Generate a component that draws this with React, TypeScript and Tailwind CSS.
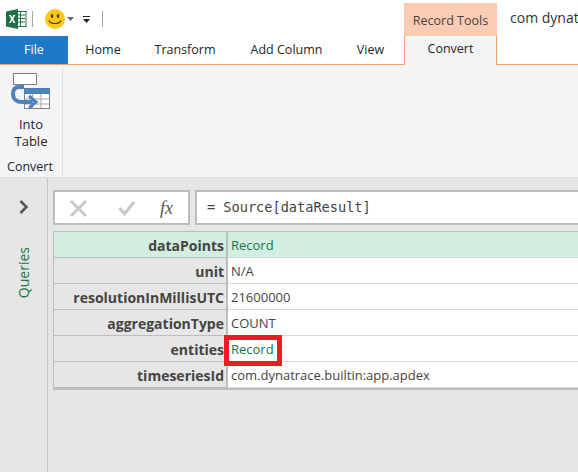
import { Fragment } from "react";

const ui = "font-['Open_Sans','Noto_Sans',sans-serif]";

const rows = [
  { key: "dataPoints", value: "Record", link: true, active: true },
  { key: "unit", value: "N/A" },
  { key: "resolutionInMillisUTC", value: "21600000" },
  { key: "aggregationType", value: "COUNT" },
  { key: "entities", value: "Record", link: true, marked: true },
  { key: "timeseriesId", value: "com.dynatrace.builtin:app.apdex" },
];

function ExcelLogo() {
  return (
    <svg width="21" height="20" viewBox="0 0 21 20">
      <rect x="8" y="2.5" width="12" height="15" fill="#fff" stroke="#217346" />
      <path d="M11 6h8M11 9.5h8M11 13h8M14.5 3v14" stroke="#217346" />
      <path d="M0 2.5 12 0v20L0 17.5z" fill="#1e7145" />
      <path d="M3 6h2l1.2 2.6L7.5 6h1.9L7.2 10l2.3 4H7.5L6.1 11.300 4.800 14H3l2.200-4z" fill="#fff" />
    </svg>
  );
}

function Smiley() {
  return (
    <svg width="20" height="20" viewBox="0 0 20 20">
      <circle cx="10" cy="10" r="10" fill="#fdc915" />
      <ellipse cx="7" cy="7" rx="1.300" ry="2" fill="#4a3b10" />
      <ellipse cx="13" cy="7" rx="1.300" ry="2" fill="#4a3b10" />
      <path d="M4 11.500c1.500 4 10.500 4 12 0" fill="none" stroke="#4a3b10" strokeWidth="1.200" />
    </svg>
  );
}

function IntoTableIcon() {
  return (
    <svg width="39" height="36" viewBox="0 0 39 36">
      <rect x="2.500" y="0.500" width="23" height="11" fill="#fff" stroke="#808080" />
      <rect x="13.500" y="15.500" width="25" height="20" fill="#fff" stroke="#808080" />
      <rect x="13" y="15" width="26" height="6" fill="#4f81bd" />
      <path d="M14 26h24M14 31h24M21.500 21v14M30 21v14" stroke="#a6a6a6" />
      <path d="M13 14H8c-5 0-6 4-6 7 0 5 4 8 9 8h10" fill="none" stroke="#4f81bd" strokeWidth="4" />
      <path d="M18 23l7 6-7 6" fill="none" stroke="#4f81bd" strokeWidth="3" />
    </svg>
  );
}

export default function App() {
  return (
    <div className={`${ui} w-[578px] h-[472px] overflow-hidden bg-[#e6e6e6] flex flex-col text-[13px] text-[#262626]`}>
      {/* title bar */}
      <div className="h-9 bg-white flex shrink-0">
        <div className="w-[404px] shrink-0 flex items-center pl-[6px] pt-[1px]">
          <ExcelLogo />
          <div className="w-px h-4 bg-[#a6a6a6] ml-[5px]" />
          <div className="ml-[12px]"><Smiley /></div>
          <svg className="ml-[2px]" width="7" height="4" viewBox="0 0 7 4"><path d="M0 0h7L3.500 4z" fill="#666" /></svg>
          <svg className="ml-[9px] mt-[2px]" width="7" height="7" viewBox="0 0 7 7">
            <path d="M0 0h7v1H0zM0 3h7L3.500 7z" fill="#222" />
          </svg>
          <div className="w-px h-4 bg-[#a6a6a6] ml-[12px]" />
        </div>
        <div className="w-[93px] shrink-0 mt-[3px] bg-[#fccbb3] text-[#444] text-[12.500px] flex items-center justify-center pt-[3px]">Record Tools</div>
        <div className="ml-[13px] mt-[7px] text-[14px] whitespace-nowrap text-[#333]">com dynat</div>
      </div>

      {/* tabs */}
      <div className="h-[29px] bg-white flex shrink-0 border-b border-[#f79e6d] text-[12.500px]">
        <div className="w-[68px] h-7 bg-[#1e79c9] text-white flex items-center justify-center">File</div>
        <div className="w-[68px] h-7 flex items-center justify-center pl-[2px]">Home</div>
        <div className="w-[98px] h-7 flex items-center justify-center">Transform</div>
        <div className="w-[105px] h-7 flex items-center justify-center">Add Column</div>
        <div className="w-[65px] h-7 flex items-center justify-center pr-[2px]">View</div>
        <div className="w-[93px] h-[29px] bg-[#f3f4f6] border-x border-[#f79e6d] flex items-center justify-center pb-[2px]">Convert</div>
      </div>

      {/* ribbon */}
      <div className="h-[113px] bg-[#f3f4f6] border-b border-[#dcdcdc] flex shrink-0">
        <div className="w-[63px] my-[2px] border-r border-[#dedede] flex flex-col items-center">
          <div className="mt-[6px] mr-[2px]"><IntoTableIcon /></div>
          <div className="mt-[7px] leading-[17px] text-center">Into<br />Table</div>
          <div className="mt-[8px] leading-[17px] text-center text-[12.500px] pr-[2px]">Convert</div>
        </div>
      </div>

      {/* body */}
      <div className="flex flex-1 min-h-0">
        <div className="w-[48px] shrink-0 border-r border-[#c6c6c6] flex flex-col items-center">
          <svg className="mt-[22px]" width="10" height="14" viewBox="0 0 10 14">
            <path d="M1.500 1l6 6-6 6" fill="none" stroke="#555" strokeWidth="2.500" />
          </svg>
          <div className="mt-[33px] [writing-mode:vertical-rl] rotate-180 text-[#217346] text-[14px] leading-none">Queries</div>
        </div>

        <div className="flex-1 min-w-0 pl-[5px] pt-[12px]">
          {/* formula bar */}
          <div className="flex h-[35px] gap-[5px]">
            <div className="w-[137px] shrink-0 bg-white border-2 border-[#bdbdbd] flex items-center pl-[14px]">
              <svg width="20" height="20" viewBox="0 0 20 20">
                <path d="M2 3l15 15M17 3L2 18" stroke="#c8c8c8" strokeWidth="3" />
              </svg>
              <svg className="ml-[29px]" width="18" height="16" viewBox="0 0 18 16">
                <path d="M1.500 8l5 6L16 2" fill="none" stroke="#c8c8c8" strokeWidth="3" />
              </svg>
              <span className="ml-[24px] font-['Liberation_Serif',serif] italic text-[18px] leading-none text-[#555]">fx</span>
            </div>
            <div className="flex-1 bg-white border-2 border-r-0 border-[#bdbdbd] flex items-center pl-[10px] font-['DejaVu_Sans_Mono',monospace] text-[13.600px] text-[#444] whitespace-pre">
              = Source[dataResult]
            </div>
          </div>

          {/* record table */}
          <div className="mt-[6px] grid grid-cols-[174px_1fr] border-t border-l border-b-2 border-[#bdbdbd]">
            {rows.map((r) => (
              <Fragment key={r.key}>
                <div className={`h-[26px] pr-[2px] pt-[1px] flex items-center justify-end font-bold text-[14px] text-[#444] whitespace-nowrap border-b border-r-2 border-[#bdbdbd] ${r.active ? "bg-[#d2eee0]" : "bg-[#e6e6e6]"}`}>
                  {r.key}
                </div>
                <div className={`relative h-[26px] pl-[3px] pt-[2px] flex items-center whitespace-nowrap border-b border-[#d8d8d8] ${r.active ? "bg-[#d2eee0]" : "bg-white"} ${r.link ? "text-[#217346]" : "text-[#444]"}`}>
                  {r.value}
                  {r.marked && <div className="absolute z-10 left-[-4px] top-[-1px] w-[58px] h-[31px] border-[5px] border-[#ed1c24]" />}
                </div>
              </Fragment>
            ))}
          </div>
        </div>
      </div>
    </div>
  );
}
